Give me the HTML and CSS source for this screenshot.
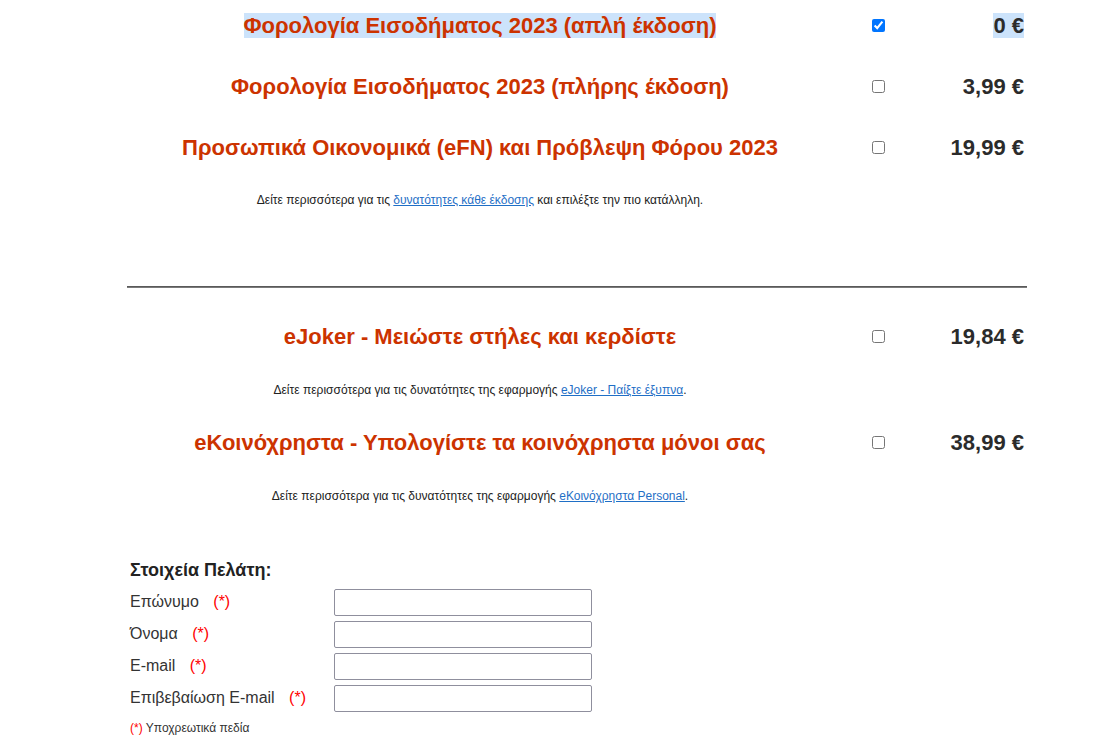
FILE: index.html
```
<!DOCTYPE html>
<html>
<head>
	<meta charset="UTF-8">
	<title>Παραγγελία</title>
	<link rel="stylesheet" href="styles.css">
</head>
<body>
	<div class="order">

		<div class="product">
			<div class="product-title"><span class="picked">Φορολογία Εισοδήματος 2023 (απλή έκδοση)</span></div>
			<div class="product-check"><input type="checkbox" checked></div>
			<div class="product-price"><span class="picked">0 €</span></div>
		</div>
		<div class="product">
			<div class="product-title">Φορολογία Εισοδήματος 2023 (πλήρης έκδοση)</div>
			<div class="product-check"><input type="checkbox"></div>
			<div class="product-price">3,99 €</div>
		</div>
		<div class="product">
			<div class="product-title">Προσωπικά Οικονομικά (eFN) και Πρόβλεψη Φόρου 2023</div>
			<div class="product-check"><input type="checkbox"></div>
			<div class="product-price">19,99 €</div>
		</div>
		<div class="note note-first">
			Δείτε περισσότερα για τις <a href="#">δυνατότητες κάθε έκδοσης</a> και επιλέξτε την πιο κατάλληλη.
		</div>

		<hr class="divider">

		<div class="product product-after-line">
			<div class="product-title">eJoker - Μειώστε στήλες και κερδίστε</div>
			<div class="product-check"><input type="checkbox"></div>
			<div class="product-price">19,84 €</div>
		</div>
		<div class="note">
			Δείτε περισσότερα για τις δυνατότητες της εφαρμογής <a href="#">eJoker - Παίξτε έξυπνα</a>.
		</div>

		<div class="product product-next">
			<div class="product-title">eΚοινόχρηστα - Υπολογίστε τα κοινόχρηστα μόνοι σας</div>
			<div class="product-check"><input type="checkbox"></div>
			<div class="product-price">38,99 €</div>
		</div>
		<div class="note">
			Δείτε περισσότερα για τις δυνατότητες της εφαρμογής <a href="#">eΚοινόχρηστα Personal</a>.
		</div>

		<div class="customer">
			<div class="customer-head">Στοιχεία Πελάτη:</div>
			<div class="field">
				<label>Επώνυμο <span class="req">(*)</span></label>
				<input type="text">
			</div>
			<div class="field">
				<label>Όνομα <span class="req">(*)</span></label>
				<input type="text">
			</div>
			<div class="field">
				<label>E-mail <span class="req">(*)</span></label>
				<input type="text">
			</div>
			<div class="field">
				<label>Επιβεβαίωση E-mail <span class="req">(*)</span></label>
				<input type="text">
			</div>
			<div class="footnote"><span class="req-small">(*)</span> Υποχρεωτικά πεδία</div>
		</div>

	</div>
</body>
</html>
```

FILE: styles.css
```
body {
	margin: 0;
	background-color: white;
	font-family: "Liberation Sans", Arial, sans-serif;
	color: #333;
}

.order {
	width: 900px;
	margin-left: 127px;
	margin-top: -5px;
}

.product {
	display: grid;
	grid-template-columns: 706px 90px 104px;
	height: 61px;
	align-items: center;
}

.product-after-line {
	margin-top: 18px;
}

.product-next {
	margin-top: 15px;
}

.product-title {
	text-align: center;
	font-size: 22px;
	font-weight: bold;
	color: #cc3300;
}

.product-check {
	display: flex;
	justify-content: center;
}

.product-check input {
	margin: 0;
	width: 13px;
	height: 13px;
}

.product-price {
	text-align: right;
	padding-right: 3px;
	font-size: 22px;
	font-weight: bold;
	color: #2b2b2b;
}

.picked {
	background-color: #cce3fb;
}

.note {
	width: 706px;
	margin-top: 16px;
	text-align: center;
	font-size: 12px;
	line-height: 14px;
	color: #222;
}

.note-first {
	margin-top: 15px;
}

.note a {
	color: #1f6fc6;
}

.divider {
	margin: 79px 0 0;
	height: 0;
	border: none;
	border-top: 1px solid #5a5a5a;
	border-bottom: 1px solid #7a7a7a;
}

.customer {
	margin-top: 57px;
	padding-left: 3px;
}

.customer-head {
	font-size: 18px;
	font-weight: bold;
	line-height: 20px;
	color: #222;
	margin-bottom: 6px;
}

.field {
	display: flex;
	align-items: center;
	height: 32px;
}

.field label {
	width: 204px;
	font-size: 16px;
	color: #333;
}

.req {
	color: red;
	margin-left: 10px;
}

.field input {
	box-sizing: border-box;
	width: 258px;
	height: 27px;
	margin: 0;
	border: 1px solid #8f8f9d;
	border-radius: 2px;
}

.footnote {
	margin-top: 7px;
	font-size: 12px;
	line-height: 14px;
	color: #333;
}

.req-small {
	color: red;
}
```
